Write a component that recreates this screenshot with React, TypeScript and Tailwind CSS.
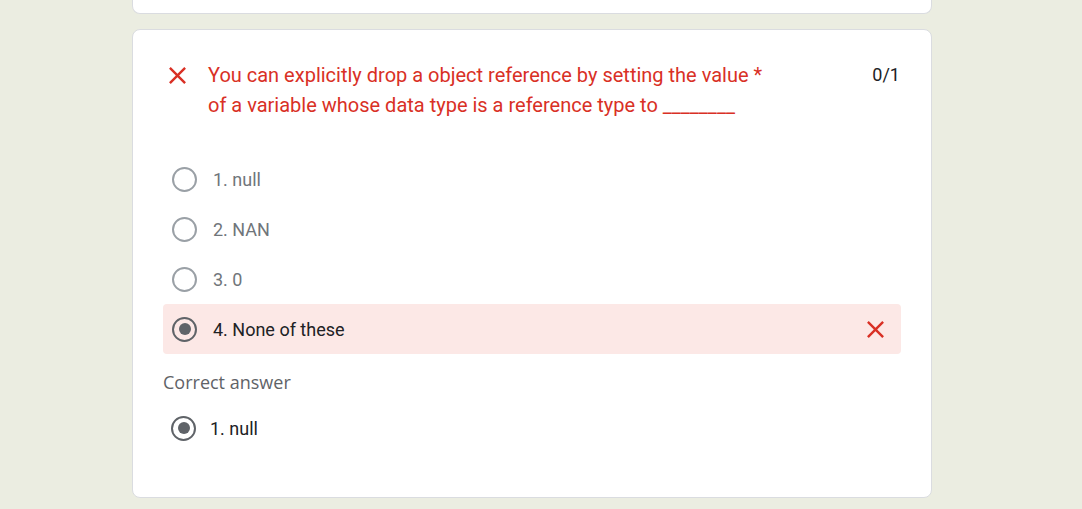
import React from "react";

const RED = "#d93025";

function XIcon({ size = 18 }: { size?: number }) {
  return (
    <svg width={size} height={size} viewBox="0 0 24 24" fill={RED}>
      <path d="M19 6.41 17.59 5 12 10.59 6.41 5 5 6.41 10.59 12 5 17.59 6.41 19 12 13.41 17.59 19 19 17.59 13.41 12z" />
    </svg>
  );
}

function Radio({ checked }: { checked?: boolean }) {
  return (
    <div
      className={
        "w-[25px] h-[25px] rounded-full border-[2.5px] flex items-center justify-center shrink-0 " +
        (checked ? "border-[#5f6368]" : "border-[#9aa0a6]")
      }
    >
      {checked && <div className="w-[12px] h-[12px] rounded-full bg-[#5f6368]" />}
    </div>
  );
}

export default function App() {
  const options = ["1. null", "2. NAN", "3. 0"];
  return (
    <div
      className="w-[1082px] h-[509px] bg-[#ebede1] overflow-hidden flex flex-col pl-[132px]"
      style={{ fontFamily: "Roboto, 'Liberation Sans', sans-serif" }}
    >
      <div className="w-[800px] h-[14px] bg-white border border-t-0 border-[#dadce0] rounded-b-lg shrink-0" />
      <div className="w-[800px] mt-[15px] bg-white border border-[#dadce0] rounded-lg px-[30px] pt-[30px] pb-[45px] shrink-0">
        <div className="flex items-start">
          <div className="w-[45px] h-[30px] flex items-center shrink-0">
            <XIcon size={29} />
          </div>
          <div className="flex-1 text-[20px] leading-[30px] text-[#d93025]">
            You can explicitly drop a object reference by setting the value <span>*</span>
            <br />
            of a variable whose data type is a reference type to ________
          </div>
          <div className="text-[18px] leading-[30px] text-[#202124] pr-[1px]">0/1</div>
        </div>
        <div className="mt-[34px] flex flex-col">
          {options.map((o) => (
            <div key={o} className="h-[50px] flex items-center pl-[9px]">
              <Radio />
              <span className="ml-[16px] text-[18px] text-[#70757a]">{o}</span>
            </div>
          ))}
          <div className="h-[50px] flex items-center pl-[9px] pr-[11px] bg-[#fce8e6] rounded-[4px]">
            <Radio checked />
            <span className="ml-[16px] text-[18px] text-[#202124] flex-1">4. None of these</span>
            <XIcon size={29} />
          </div>
        </div>
        <div
          className="mt-[18px] text-[18px] font-medium leading-[20px] text-[#5f6368]"
          style={{ fontFamily: "'Open Sans', Roboto, sans-serif" }}
        >
          Correct answer
        </div>
        <div className="h-[48px] mt-[12px] flex items-center pl-[8px]">
          <Radio checked />
          <span className="ml-[14px] text-[18px] text-[#202124]">1. null</span>
        </div>
      </div>
    </div>
  );
}
